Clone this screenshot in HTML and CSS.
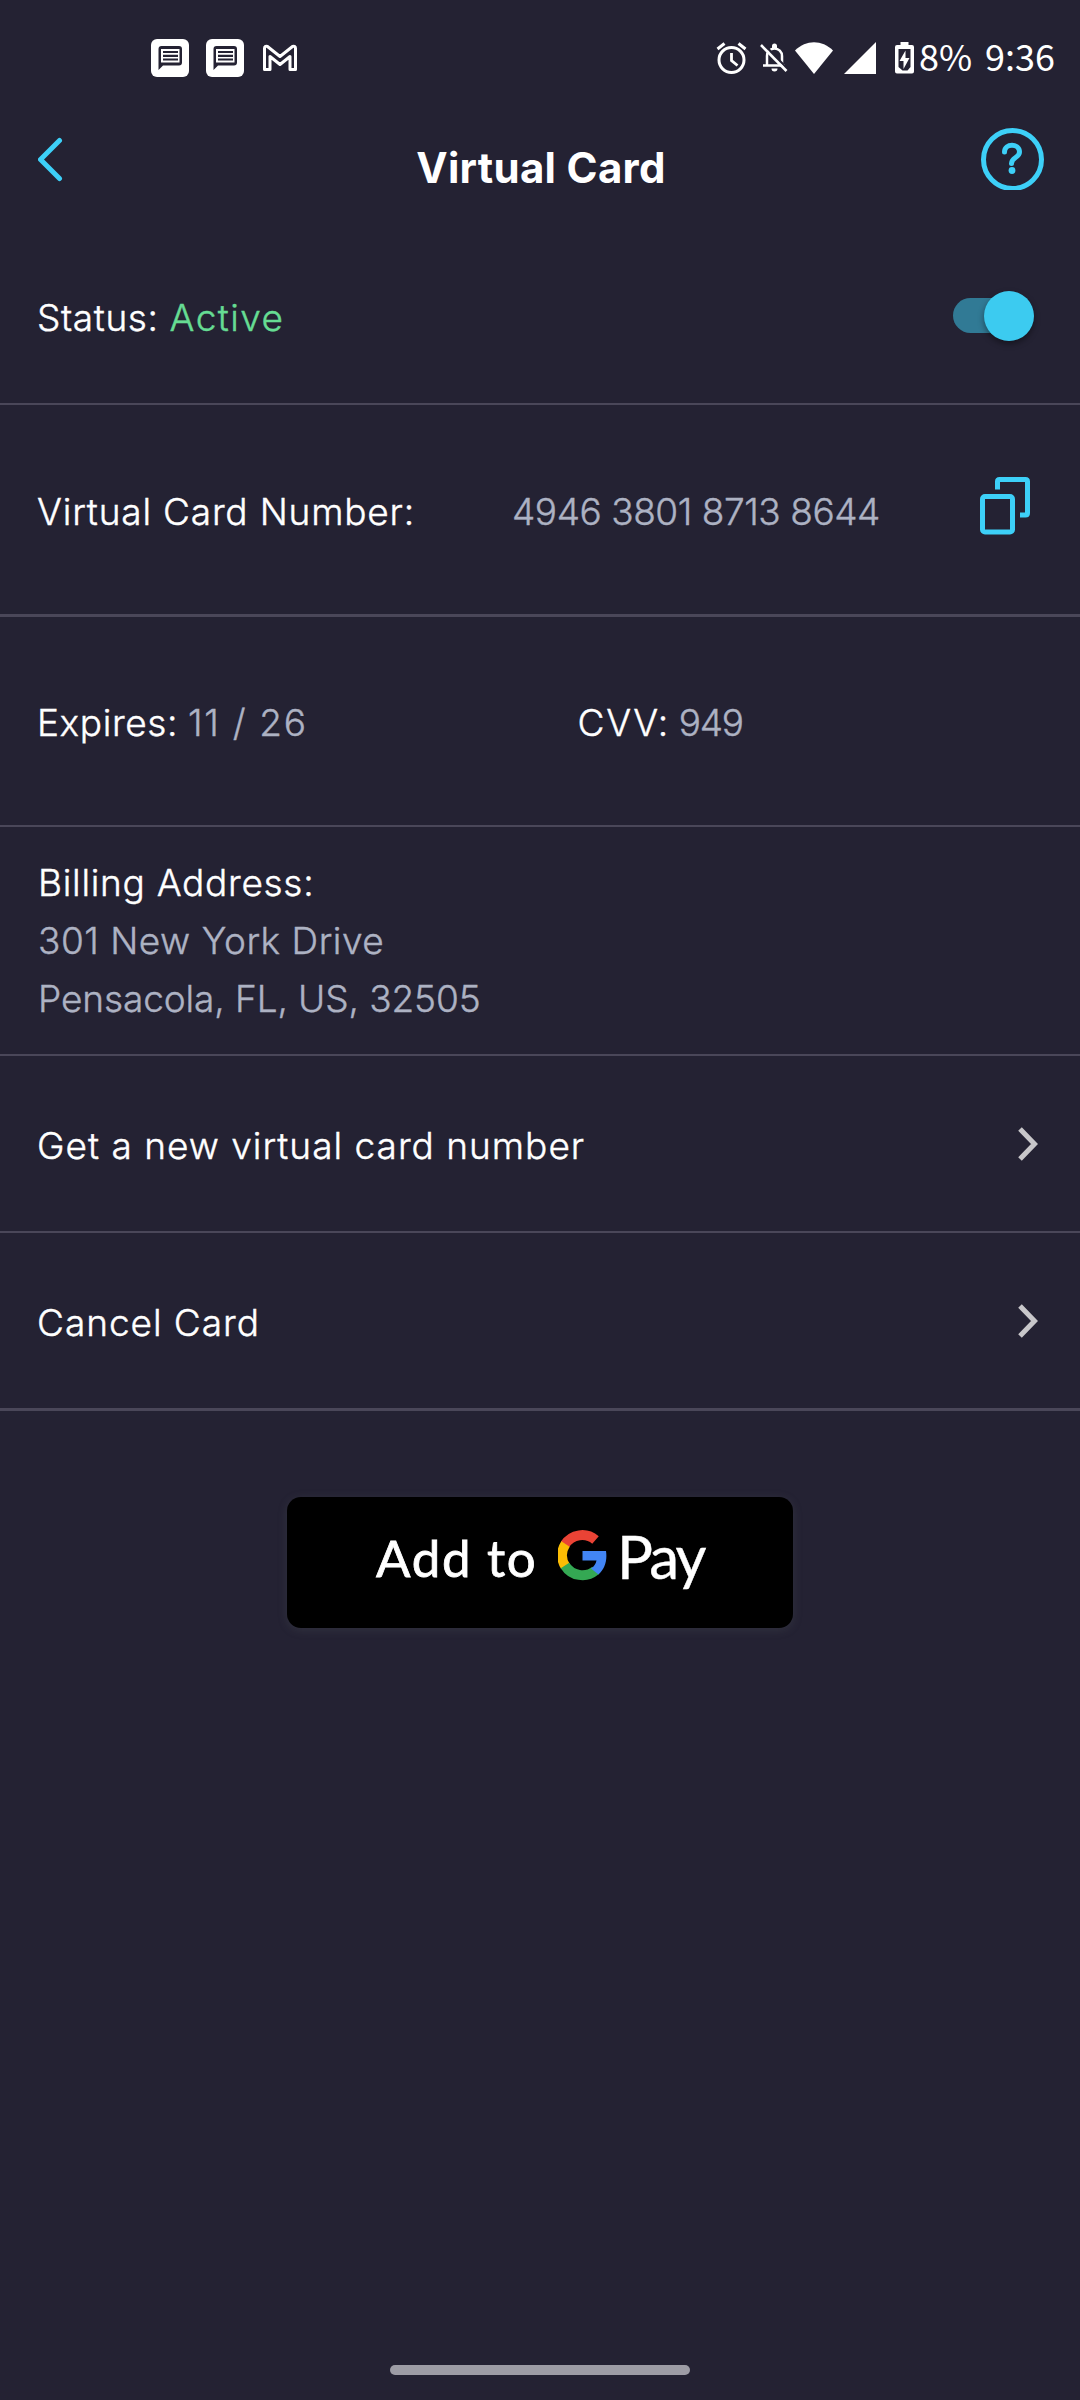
FILE: index.html
```html
<!DOCTYPE html>
<html>
  <head>
    <meta charset="utf-8" />
    <title>Virtual Card</title>
    <link rel="stylesheet" href="styles.css">
  </head>

  <body>
    <div class="screen">
      <div class="status-bar">
        <div class="notifications">
          <svg width="38" height="38" viewBox="0 0 38 38">
            <rect width="38" height="38" rx="6" fill="#fff" />
            <path d="M7.500 31V10a3 3 0 0 1 3-3H28a3 3 0 0 1 3 3v13.500a3 3 0 0 1-3 3H12z" fill="#242233" />
            <rect x="10" y="10" width="18.500" height="13.500" fill="#fff" />
            <path d="M12 13h15M12 16.800h15M12 20.500h15" stroke="#242233" stroke-width="2.200" />
          </svg>
          <svg width="38" height="38" viewBox="0 0 38 38">
            <rect width="38" height="38" rx="6" fill="#fff" />
            <path d="M7.500 31V10a3 3 0 0 1 3-3H28a3 3 0 0 1 3 3v13.500a3 3 0 0 1-3 3H12z" fill="#242233" />
            <rect x="10" y="10" width="18.500" height="13.500" fill="#fff" />
            <path d="M12 13h15M12 16.800h15M12 20.500h15" stroke="#242233" stroke-width="2.200" />
          </svg>
          <svg class="gmail" width="36" height="28" viewBox="0 0 36 28">
            <path d="M2.500 25.500V4.500Q2.500 1.500 5.500 2.500L18 12.500L30.500 2.500Q33.500 1.500 33.500 4.500V25.500H28V12.500L18 20.500L8 12.500V25.500Z" fill="none" stroke="#fff" stroke-width="3" stroke-linejoin="round" />
          </svg>
        </div>
        <div class="system">
          <svg class="alarm" width="32" height="32" viewBox="0 0 32 32" fill="none" stroke="#fff">
            <circle cx="15.500" cy="18" r="12.500" stroke-width="3" />
            <path d="M15.500 11v7.500l6 5" stroke-width="2.800" />
            <path d="M1.500 7l7-5.500M22.500 1.500l7 5.500" stroke-width="3" />
          </svg>
          <svg class="bell" width="28" height="30" viewBox="0 0 28 30">
            <path d="M7 22.500V13a7.500 7.500 0 0 1 15 0v9.500M3 22.500h22" fill="none" stroke="#fff" stroke-width="2.500" />
            <path d="M12 6V3a2.500 2.500 0 0 1 5 0v3zM11.500 25.500h6a3 3 0 0 1-6 0z" fill="#fff" />
            <path d="M3 .500l25 26" stroke="#242233" stroke-width="2.500" />
            <path d="M1 2l25.500 26" stroke="#fff" stroke-width="2.600" />
          </svg>
          <svg class="wifi" width="38" height="32" viewBox="0 0 38 32">
            <path d="M19 32L0 8.500C11-2.500 27-2.500 38 8.500Z" fill="#fff" />
          </svg>
          <svg class="signal" width="32" height="32" viewBox="0 0 32 32">
            <path d="M0 32L32 0V32Z" fill="#fff" />
          </svg>
          <svg class="battery" width="19" height="32" viewBox="0 0 19 32">
            <path d="M5.500 0h8v3H17a2 2 0 0 1 2 2v24.500a2 2 0 0 1-2 2H2a2 2 0 0 1-2-2V5a2 2 0 0 1 2-2h3.500z" fill="#fff" />
            <path d="M3.500 7h12v18l-3 3.500h-5L3.500 25z" fill="#242233" />
            <path d="M10.500 8.500L4.500 19H8.500v8L14.500 16H10.500z" fill="#fff" />
          </svg>
          <span class="percent">8%</span>
          <span class="clock">9:36</span>
        </div>
      </div>

      <div class="header">
        <svg class="back" width="30" height="50" viewBox="0 0 30 50">
          <path d="M21.500 5.500L2.500 24.500L21.500 43.500" fill="none" stroke="#3dd0f8" stroke-width="5" stroke-linecap="round" stroke-linejoin="round" />
        </svg>
        <h1 class="title">Virtual Card</h1>
        <svg class="help" width="63" height="62" viewBox="0 0 63 62" fill="none" stroke="#3dd0f8">
          <circle cx="31.500" cy="31.500" r="29" stroke-width="5" />
          <path d="M23.500 24C23.500 15 38.500 15 38.500 24C38.500 30 30.500 29 30.500 35.500" stroke-width="5" stroke-linecap="round" />
          <circle cx="31" cy="42.500" r="3.400" fill="#3dd0f8" stroke="none" />
        </svg>
      </div>

      <div class="row status">
        <div><span class="status-label">Status:</span><span class="active">Active</span></div>
        <div class="toggle"><div class="knob"></div></div>
      </div>

      <div class="row number">
        <span class="number-label">Virtual Card Number:</span>
        <span class="number-value">4946 3801 8713 8644</span>
        <svg class="copy" width="50" height="58" viewBox="0 0 50 58" fill="none" stroke="#3dd0f8" stroke-width="5">
          <rect x="2.500" y="19.500" width="30" height="35.500" rx="2.500" />
          <path d="M17.500 12.500V4.500Q17.500 2.500 19.500 2.500H45.500Q47.500 2.500 47.500 4.500V36Q47.500 38 45.500 38H40" />
        </svg>
      </div>

      <div class="row expires">
        <div class="half"><span class="exp-label">Expires:</span><span class="exp-value">11 / 26</span></div>
        <div class="half"><span class="cvv-label">CVV:</span><span class="cvv-value">949</span></div>
      </div>

      <div class="address">
        <div class="addr-label">Billing Address:</div>
        <div class="addr-street">301 New York Drive</div>
        <div class="addr-city">Pensacola, FL, US, 32505</div>
      </div>

      <div class="row link">
        <span class="new-number">Get a new virtual card number</span>
        <svg class="chevron" width="24" height="34" viewBox="0 0 24 34">
          <path d="M2 2L16.500 17L2 32" fill="none" stroke="#c8c7ca" stroke-width="5" />
        </svg>
      </div>

      <div class="row link last">
        <span class="cancel">Cancel Card</span>
        <svg class="chevron" width="24" height="34" viewBox="0 0 24 34">
          <path d="M2 2L16.500 17L2 32" fill="none" stroke="#c8c7ca" stroke-width="5" />
        </svg>
      </div>

      <div class="gpay">
        <span class="add">Add to</span>
        <svg class="g-logo" width="49" height="51" viewBox="0 0 49 51">
          <path d="M7 14.500A20.500 20.500 0 0 1 37.500 10" fill="none" stroke="#ea4335" stroke-width="10" />
          <path d="M7.500 14A20.500 20.500 0 0 0 7.500 36.500" fill="none" stroke="#fbbc04" stroke-width="10" />
          <path d="M7 35.500A20.500 20.500 0 0 0 37.500 40.500" fill="none" stroke="#34a853" stroke-width="10" />
          <path d="M24.500 21H48C49.500 31 46.500 39 40.500 44.500L33 38.500C36 36.500 37.800 34 38.500 30.500H24.500Z" fill="#4285f4" />
        </svg>
        <span class="pay">Pay</span>
      </div>

      <div class="home-bar"></div>
    </div>
  </body>
</html>
```
FILE: styles.css
```css
* {
  margin: 0;
  padding: 0;
  box-sizing: border-box;
}

body {
  background-color: #242233;
}

svg {
  display: block;
  flex: none;
}

.screen {
  width: 1080px;
  height: 2400px;
  display: flex;
  flex-direction: column;
  background-color: #242233;
  color: #fff;
  font-family: Inter, "Open Sans", sans-serif;
  font-size: 37px;
  font-weight: 300;
  white-space: nowrap;
}

.status-bar {
  height: 116px;
  padding: 0 25px 0 151px;
  display: flex;
  justify-content: space-between;
  align-items: center;
  font-family: "Noto Sans CJK JP", sans-serif;
  font-size: 36px;
  font-weight: 400;
  line-height: 54px;
}

.notifications {
  display: flex;
  align-items: center;
  gap: 17px;
}

.gmail {
  margin-left: 1px;
}

.system {
  display: flex;
  align-items: center;
}

.bell {
  margin-left: 12px;
}

.wifi {
  margin-left: 7px;
}

.signal {
  margin-left: 11px;
}

.battery {
  margin-left: 19px;
}

.percent {
  width: 53px;
  margin: -7px 0 0 5px;
}

.clock {
  width: 70px;
  margin: -7px 0 0 13px;
}

.header {
  height: 113px;
  padding: 12px 36px 0 38px;
  display: flex;
  justify-content: space-between;
  align-items: flex-start;
}

.back {
  margin-top: 7px;
}

.title {
  margin: 13px 0 0 33px;
  font-size: 42px;
  line-height: 54px;
  font-weight: 700;
  letter-spacing: 0.3px;
}

.row {
  padding: 3px 38px 0 37px;
  display: flex;
  justify-content: space-between;
  align-items: center;
  border-bottom: 2px solid #4a4759;
}

.row,
.address {
  -webkit-text-stroke-width: 0.4px;
}

.status {
  height: 176px;
}

.status-label {
  letter-spacing: 0.6px;
}

.active {
  margin-left: 11px;
  letter-spacing: 1.4px;
  color: #66dc93;
}

.toggle {
  width: 75px;
  height: 35px;
  margin: -5px 14px 0 0;
  border-radius: 18px;
  background-color: #317a95;
  position: relative;
}

.knob {
  position: absolute;
  left: 31px;
  top: -7px;
  width: 50px;
  height: 50px;
  border-radius: 50%;
  background-color: #3ccbf0;
  box-shadow: 0 3px 6px rgba(0, 0, 0, 0.4);
}

.number {
  height: 212px;
  border-bottom-width: 3px;
  justify-content: flex-start;
}

.number-label {
  width: 475px;
  letter-spacing: 0.8px;
}

.number-value {
  width: 468px;
  letter-spacing: -0.45px;
  color: #adb2c3;
}

.copy {
  margin-top: -10px;
}

.expires {
  height: 210px;
}

.half {
  width: 50%;
}

.half + .half {
  padding-left: 38px;
}

.exp-label {
  letter-spacing: 0.6px;
}

.exp-value {
  margin-left: 10px;
  letter-spacing: 1.7px;
  color: #adb2c3;
}

.cvv-label {
  letter-spacing: 1.7px;
}

.cvv-value {
  margin-left: 9px;
  letter-spacing: -1.3px;
  color: #adb2c3;
}

.address {
  height: 229px;
  padding: 27px 38px 0 38px;
  border-bottom: 2px solid #4a4759;
  line-height: 58px;
}

.addr-label {
  letter-spacing: 0.7px;
}

.addr-street {
  letter-spacing: 0.5px;
  color: #adb2c3;
}

.addr-city {
  letter-spacing: -0.1px;
  color: #adb2c3;
}

.link {
  height: 177px;
}

.last {
  height: 178px;
  border-bottom-width: 3px;
}

.new-number {
  letter-spacing: 1px;
}

.cancel {
  letter-spacing: 0.95px;
}

.chevron {
  margin-top: -3px;
}

.gpay {
  width: 506px;
  height: 131px;
  margin: 86px auto 0;
  padding-left: 89px;
  display: flex;
  align-items: flex-start;
  border-radius: 14px;
  background-color: #000;
  box-shadow: 0 2px 10px rgba(90, 100, 100, 0.25);
  font-family: Lato, sans-serif;
  line-height: 60px;
}

.add {
  width: 182px;
  margin-top: 31px;
  font-size: 51px;
  letter-spacing: 1.7px;
  font-weight: 400;
  -webkit-text-stroke: 0.8px #fff;
}

.g-logo {
  margin-top: 33px;
}

.pay {
  margin: 29px 0 0 10px;
  font-size: 60px;
  font-weight: 400;
  letter-spacing: -2.8px;
  -webkit-text-stroke: 0.4px #fff;
}

.home-bar {
  width: 300px;
  height: 10px;
  margin: auto auto 25px;
  border-radius: 5px;
  background-color: #9d9ca5;
}
```
